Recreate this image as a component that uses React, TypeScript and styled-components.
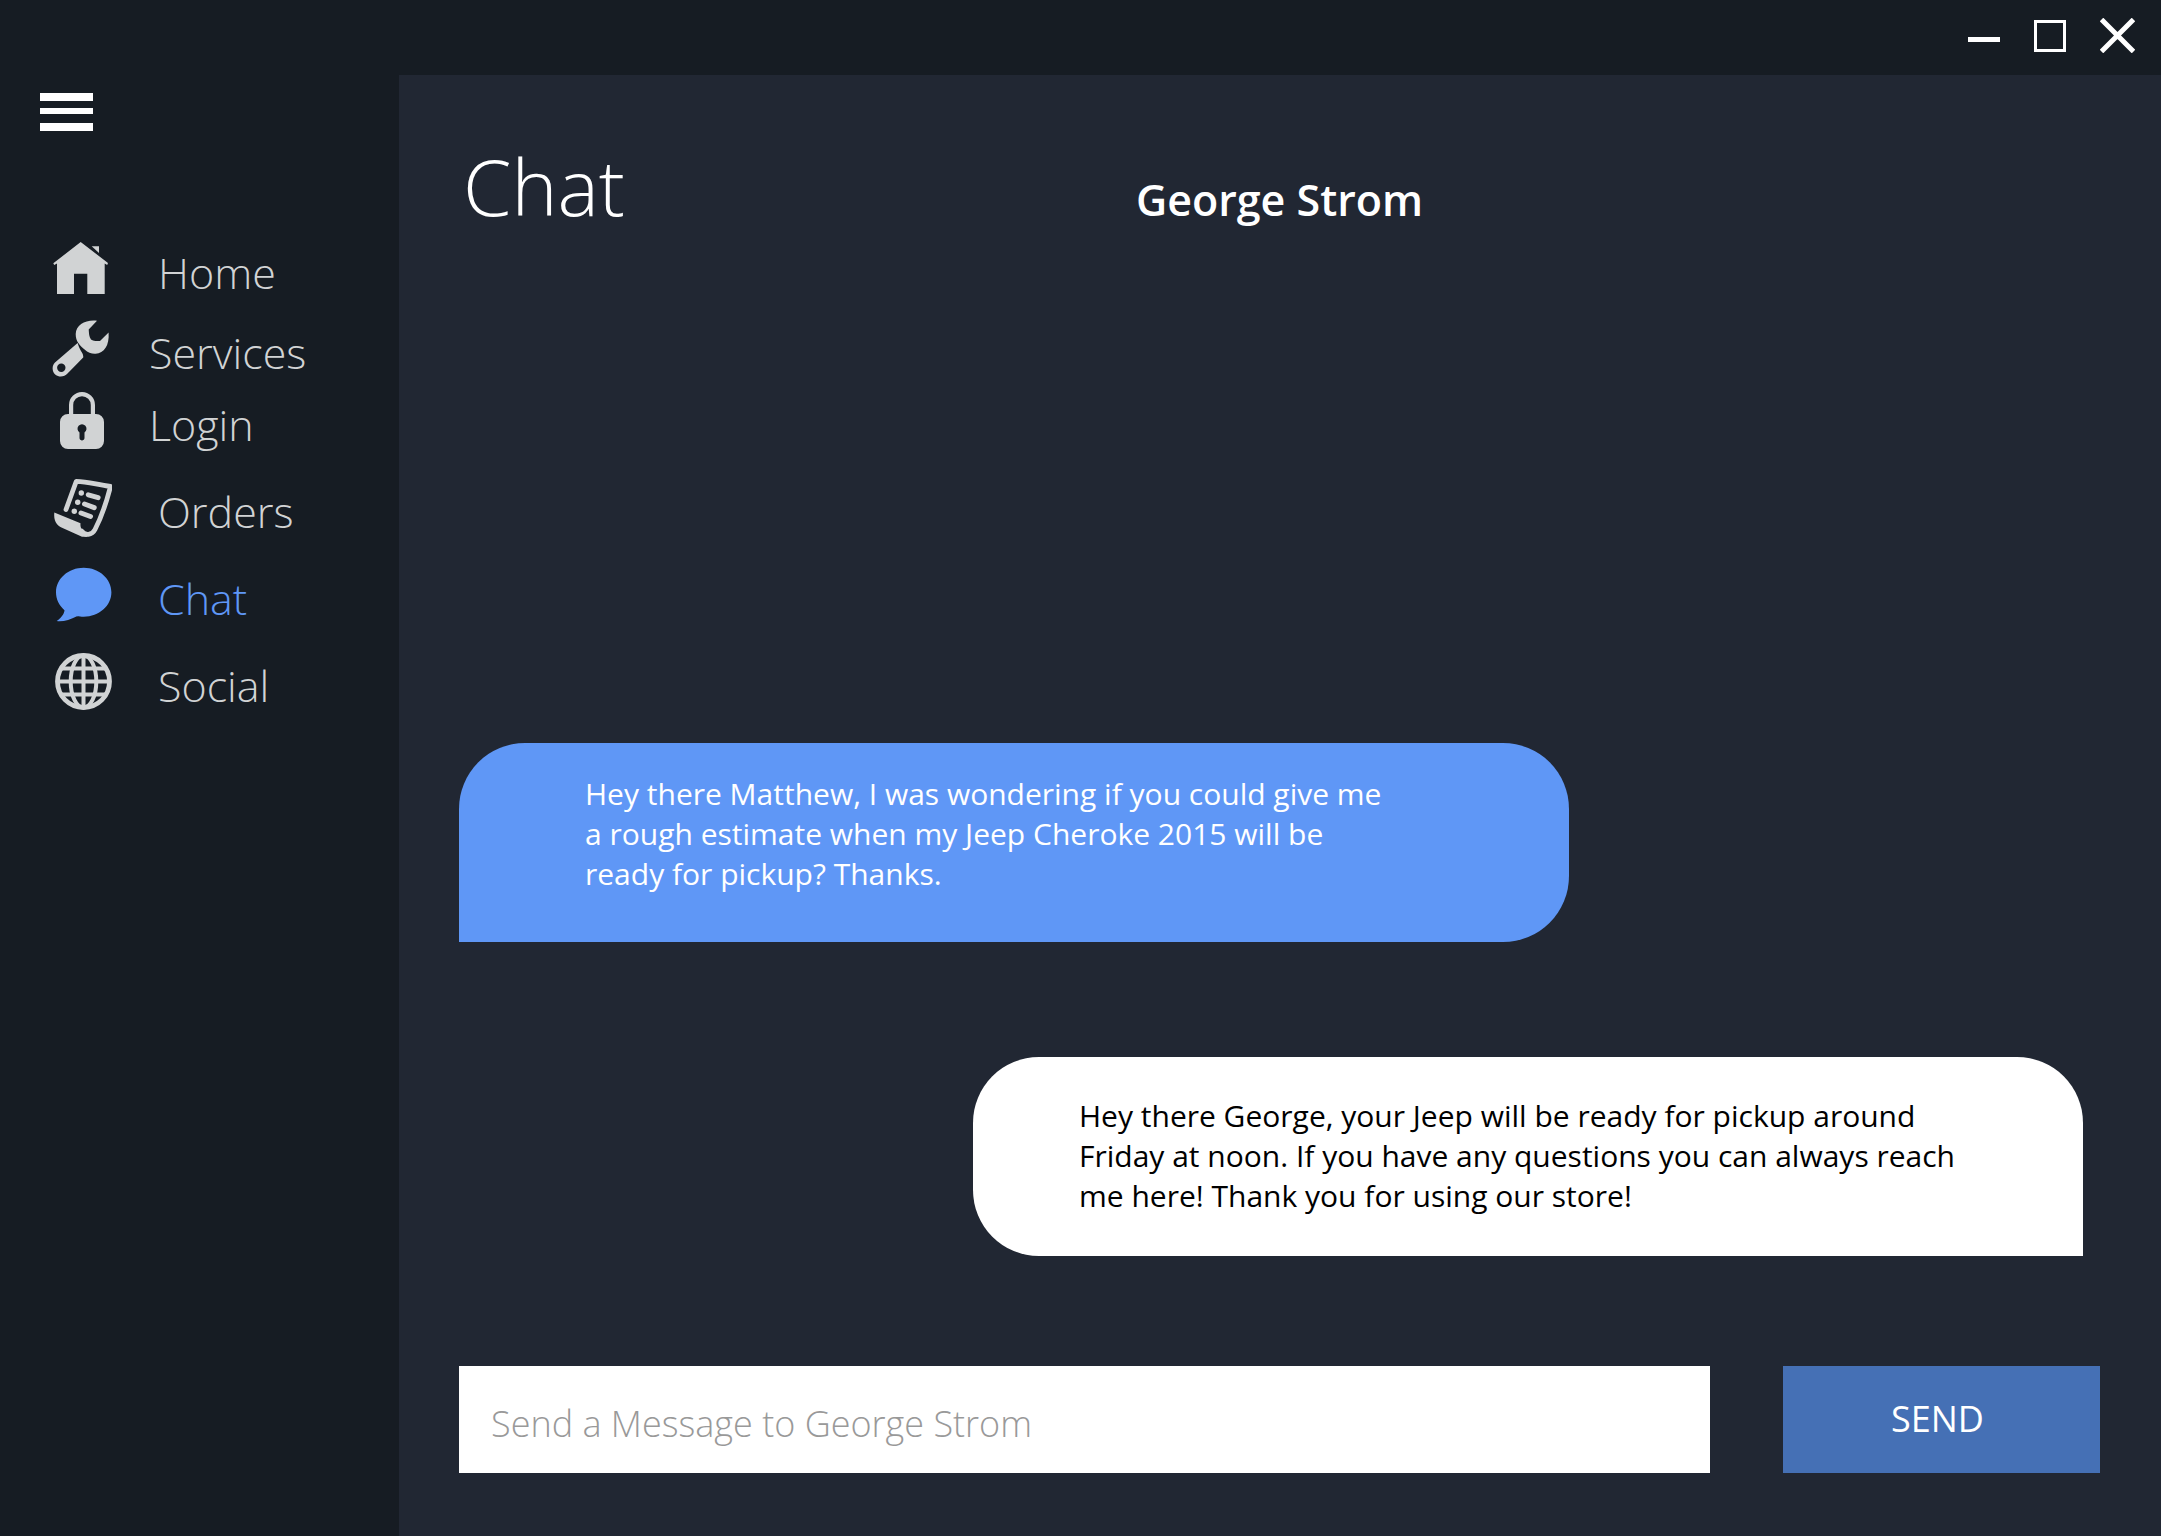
import React, { useState } from "react";
import styled, { createGlobalStyle, css } from "styled-components";

const GlobalStyle = createGlobalStyle`
  *, *::before, *::after { box-sizing: border-box; }
  body {
    margin: 0;
    background: #212733;
    font-family: "Open Sans", "Noto Sans", sans-serif;
  }
  button, input { font: inherit; border: 0; border-radius: 0; }
  h1, h2, p { margin: 0; }
`;

const Shell = styled.div`
  display: flex;
  flex-direction: column;
  min-height: 100vh;
`;

const TitleBar = styled.header`
  display: flex;
  justify-content: flex-end;
  align-items: center;
  gap: 34px;
  height: 75px;
  padding: 0 26px 4px 0;
  background: #161c23;
`;

const IconButton = styled.button`
  display: flex;
  padding: 0;
  background: none;
  color: #fff;
  cursor: pointer;
`;

const Body = styled.div`
  display: flex;
  flex: 1;
`;

const Sidebar = styled.aside`
  flex: 0 0 399px;
  padding: 18px 0 0 40px;
  background: #161c23;
`;

const NavList = styled.ul`
  list-style: none;
  margin: 102px 0 0;
  padding: 0 0 0 12px;
`;

type Spacing = "none" | "small" | "large";
const spacings = { none: 0, small: 8, large: 15 };

const NavItem = styled.li<{ $space: Spacing }>`
  margin-top: ${(p) => spacings[p.$space]}px;
`;

const NavLink = styled.a<{ $active: boolean; $tight: boolean }>`
  display: flex;
  align-items: center;
  gap: ${(p) => (p.$tight ? 37 : 46)}px;
  height: 72px;
  color: ${(p) => (p.$active ? "#5f97f6" : "#d1d3d4")};
  font-size: 43px;
  font-weight: 300;
  line-height: 60px;
  text-decoration: none;
`;

const NavLabel = styled.span`
  padding-top: 8px;
`;

const Main = styled.main`
  display: flex;
  flex: 1;
  flex-direction: column;
  padding: 65px 61px 63px 60px;
`;

const Heading = styled.div`
  display: grid;
  grid-template-columns: 1fr auto 1fr;
  align-items: baseline;
`;

const PageTitle = styled.h1`
  padding-left: 4px;
  color: #fff;
  font-size: 78px;
  font-weight: 300;
  line-height: 92px;
`;

const ContactName = styled.h2`
  color: #fff;
  font-size: 43px;
  font-weight: 600;
  line-height: 60px;
`;

const Messages = styled.section`
  display: flex;
  flex: 1;
  flex-direction: column;
  justify-content: flex-end;
  gap: 115px;
  padding: 0 17px 110px 0;
`;

const Bubble = styled.p<{ $own: boolean }>`
  width: min(1110px, 100%);
  min-height: 199px;
  font-size: 30px;
  line-height: 40px;
  ${(p) =>
    p.$own
      ? css`
          align-self: flex-end;
          padding: 39px 48px 40px 106px;
          border-radius: 66px 66px 0 66px;
          background: #fff;
          color: #000;
        `
      : css`
          align-self: flex-start;
          padding: 31px 48px 48px 126px;
          border-radius: 66px 66px 66px 0;
          background: #5f97f6;
          color: #fff;
        `}
`;

const Composer = styled.form`
  display: flex;
  gap: 73px;
`;

const MessageInput = styled.input`
  flex: 1;
  min-width: 0;
  height: 107px;
  padding: 8px 32px 0;
  background: #fff;
  color: #212733;
  font-size: 36px;
  font-weight: 300;
  &::placeholder { color: #999; opacity: 1; }
`;

const SendButton = styled.button`
  flex: 0 0 317px;
  height: 107px;
  padding: 0 8px 2px 0;
  background: #4570b5;
  color: #fff;
  font-size: 36px;
  cursor: pointer;
`;

const Glyph = ({ children }: { children: React.ReactNode }) => (
  <svg width="60" height="60" viewBox="0 0 60 60" fill="currentColor" aria-hidden="true">
    {children}
  </svg>
);

const HomeIcon = () => (
  <Glyph>
    <path d="M28.700 3 56 24l-.8 2-2.500-1.400V55H35.300V34.700H22V55H5V24.600L2.200 26l-.9-1.700Z" />
    <path d="M39.700 7.300H47V14Z" />
  </Glyph>
);

const WrenchIcon = () => (
  <Glyph>
    <path d="M45 1.800C34 .5 24 5.500 23.700 15c0 4 1 6.500 2.400 8.800 2 3.200 4 4.500 6.500 6.700 3.500 3.300 7 4.400 11 4.200 8.500-.5 13.900-8 13-21.200L48 21.900c-3.200.1-6.500.3-9-1.400-2-3-2-6-2.300-10Z" />
    <path
      fillRule="evenodd"
      d="M25.600 24 3 43.500C-.5 47 0 53 3.500 55.800c3.500 2.700 9 2.200 12-1.200L31.200 38.500c.5-4-2.200-5.500-4.200-10.500ZM9.300 44.500a4.200 4.200 0 1 0 0 8.400 4.200 4.200 0 0 0 0-8.400Z"
    />
  </Glyph>
);

const LockIcon = () => (
  <Glyph>
    <path
      fillRule="evenodd"
      d="M17 23V14a13 13 0 0 1 26 0v9h1a8 8 0 0 1 8 8v19a8 8 0 0 1-8 8H16a8 8 0 0 1-8-8V31a8 8 0 0 1 8-8Zm4.200 0h17.600V14a8.800 8.800 0 0 0-17.600 0ZM27.500 41.500V47c0 3.200 5 3.200 5 0v-5.500a4.500 4.500 0 1 0-5 0Z"
    />
  </Glyph>
);

const OrdersIcon = () => (
  <Glyph>
    <path
      d="M14 31.500 24.300 3.300C36 3.500 44 6.500 58.500 8.500 54 26 49 40 43 51.500 40 57.500 33 58 29.500 53"
      fill="none"
      stroke="currentColor"
      strokeWidth="4.800"
      strokeLinecap="round"
      strokeLinejoin="round"
    />
    <path d="M2.300 34.500 28.500 45.300c-.7 5 2.500 9.500 8 10.200l-1.500 3.200h-5L10 49.800C4.500 47.500 1.500 42.500 2.300 34.500Z" />
    <circle cx="29.300" cy="15" r="2.700" />
    <circle cx="25.700" cy="24.300" r="2.700" />
    <circle cx="22.300" cy="33.200" r="2.700" />
    <path
      d="m36.300 16.800 9.800 2.800M32.500 26l9.700 3.600M29 35l9.500 3.500"
      stroke="currentColor"
      strokeWidth="5"
      strokeLinecap="round"
    />
  </Glyph>
);

const ChatIcon = () => (
  <Glyph>
    <path d="M31.700 2.800C47 2.800 59.400 13.700 59.400 27.300S47 51.700 31.700 51.700c-2.700 0-4.700-.2-6.700-.5-7 3.500-14 5.800-20.300 4.900 4-3.300 7.500-6.500 7.800-10.900C7 40.500 4 34.300 4 27.300 4 13.700 16.400 2.800 31.700 2.800Z" />
  </Glyph>
);

const GlobeIcon = () => (
  <Glyph>
    <g fill="none" stroke="currentColor" strokeWidth="4">
      <circle cx="31.500" cy="29.500" r="26" strokeWidth="4.800" />
      <ellipse cx="31.500" cy="29.500" rx="12.800" ry="26" />
      <path d="M31.500 3v53M5 29.500h53M9.500 16.500h44M9.500 42.500h44" />
    </g>
  </Glyph>
);

const navItems: {
  label: string;
  icon: React.ComponentType;
  space: Spacing;
  tight?: boolean;
  active?: boolean;
}[] = [
  { label: "Home", icon: HomeIcon, space: "none" },
  { label: "Services", icon: WrenchIcon, space: "small", tight: true },
  { label: "Login", icon: LockIcon, space: "none", tight: true },
  { label: "Orders", icon: OrdersIcon, space: "large" },
  { label: "Chat", icon: ChatIcon, space: "large", active: true },
  { label: "Social", icon: GlobeIcon, space: "large" },
];

export default function App() {
  const [draft, setDraft] = useState("");

  return (
    <>
      <GlobalStyle />
      <Shell>
        <TitleBar>
          <IconButton type="button" aria-label="Minimize">
            <svg width="32" height="34" viewBox="0 0 32 34">
              <path d="M0 20.500h32" stroke="currentColor" strokeWidth="5" />
            </svg>
          </IconButton>
          <IconButton type="button" aria-label="Maximize">
            <svg width="32" height="32" viewBox="0 0 32 32">
              <path d="M1.500 1.500h29v29h-29Z" fill="none" stroke="currentColor" strokeWidth="3" />
            </svg>
          </IconButton>
          <IconButton type="button" aria-label="Close">
            <svg width="35" height="35" viewBox="0 0 35 35">
              <path d="m1.500 1.500 32 32M33.500 1.500l-32 32" stroke="currentColor" strokeWidth="5" />
            </svg>
          </IconButton>
        </TitleBar>
        <Body>
          <Sidebar>
            <IconButton type="button" aria-label="Toggle menu">
              <svg width="53" height="38" viewBox="0 0 53 38" fill="currentColor">
                <path d="M0 0h53v8H0ZM0 15h53v6H0ZM0 30h53v8H0Z" />
              </svg>
            </IconButton>
            <nav aria-label="Main">
              <NavList>
                {navItems.map(({ label, icon: Icon, space, tight, active }) => (
                  <NavItem key={label} $space={space}>
                    <NavLink
                      href={`#${label.toLowerCase()}`}
                      $active={!!active}
                      $tight={!!tight}
                      aria-current={active ? "page" : undefined}
                    >
                      <Icon />
                      <NavLabel>{label}</NavLabel>
                    </NavLink>
                  </NavItem>
                ))}
              </NavList>
            </nav>
          </Sidebar>
          <Main>
            <Heading>
              <PageTitle>Chat</PageTitle>
              <ContactName>George Strom</ContactName>
            </Heading>
            <Messages aria-label="Conversation">
              <Bubble $own={false}>
                Hey there Matthew, I was wondering if you could give me
                <br />
                a rough estimate when my Jeep Cheroke 2015 will be
                <br />
                ready for pickup? Thanks.
              </Bubble>
              <Bubble $own>
                Hey there George, your Jeep will be ready for pickup around
                <br />
                Friday at noon. If you have any questions you can always reach
                <br />
                me here! Thank you for using our store!
              </Bubble>
            </Messages>
            <Composer
              onSubmit={(event) => {
                event.preventDefault();
                setDraft("");
              }}
            >
              <MessageInput
                type="text"
                aria-label="Send a Message to George Strom"
                placeholder="Send a Message to George Strom"
                value={draft}
                onChange={(event) => setDraft(event.target.value)}
              />
              <SendButton type="submit">SEND</SendButton>
            </Composer>
          </Main>
        </Body>
      </Shell>
    </>
  );
}
